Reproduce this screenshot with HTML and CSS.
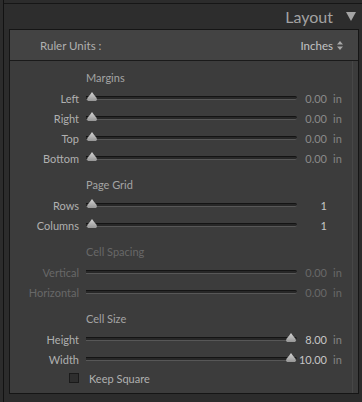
FILE: index.html
```html
<!DOCTYPE html>
<html lang="en">
<head>
  <meta charset="UTF-8">
  <title>Layout</title>
  <link rel="stylesheet" href="styles.css">
</head>
<body>
  <div class="sidebar">
    <div class="header">
      <span class="title">Layout</span>
      <svg class="caret" width="10" height="9" viewBox="0 0 10 9"><path d="M0 0H10L5 9Z" fill="#a4a4a4"/></svg>
    </div>
    <div class="panel">
      <div class="ruler">
        <span>Ruler Units :</span>
        <span class="units">Inches
          <svg class="updown" width="6" height="9" viewBox="0 0 6 9"><path d="M3 0L6 3.5H0Z M3 9L0 5.5H6Z" fill="#a8a8a8"/></svg>
        </span>
      </div>
      <div class="content">
        <div class="group">
          <div class="heading">Margins</div>
          <div class="row"><span class="label">Left</span><div class="track"><span class="thumb"></span></div><span class="value">0.00</span><span class="unit">in</span></div>
          <div class="row"><span class="label">Right</span><div class="track"><span class="thumb"></span></div><span class="value">0.00</span><span class="unit">in</span></div>
          <div class="row"><span class="label">Top</span><div class="track"><span class="thumb"></span></div><span class="value">0.00</span><span class="unit">in</span></div>
          <div class="row"><span class="label">Bottom</span><div class="track"><span class="thumb"></span></div><span class="value">0.00</span><span class="unit">in</span></div>
        </div>
        <div class="group">
          <div class="heading">Page Grid</div>
          <div class="row"><span class="label">Rows</span><div class="track"><span class="thumb"></span></div><span class="value bright">1</span><span class="unit"></span></div>
          <div class="row"><span class="label">Columns</span><div class="track"><span class="thumb"></span></div><span class="value bright">1</span><span class="unit"></span></div>
        </div>
        <div class="group disabled">
          <div class="heading">Cell Spacing</div>
          <div class="row"><span class="label">Vertical</span><div class="track"></div><span class="value">0.00</span><span class="unit">in</span></div>
          <div class="row"><span class="label">Horizontal</span><div class="track"></div><span class="value">0.00</span><span class="unit">in</span></div>
        </div>
        <div class="group">
          <div class="heading">Cell Size</div>
          <div class="row"><span class="label">Height</span><div class="track"><span class="thumb end"></span></div><span class="value bright">8.00</span><span class="unit">in</span></div>
          <div class="row"><span class="label">Width</span><div class="track"><span class="thumb end"></span></div><span class="value bright">10.00</span><span class="unit">in</span></div>
          <label class="check"><span class="box"></span>Keep Square</label>
        </div>
      </div>
    </div>
  </div>
</body>
</html>
```

FILE: styles.css
```css
body {
  margin: 0;
  background: #2c2c2c;
  font-family: Lato, "Open Sans", sans-serif;
  color: #b0b0b0;
  font-size: 11px;
}
.sidebar {
  margin-left: 3px;
  border-left: 1px solid #121212;
  height: 402px;
  box-sizing: border-box;
  padding-top: 3px;
}
.header {
  border-top: 1px solid #161616;
  height: 25px;
  display: flex;
  justify-content: flex-end;
  align-items: center;
  padding-right: 6px;
  background: #2d2d2d;
}
.title {
  font-size: 16px;
  color: #a2a2a2;
}
.caret {
  margin-left: 13px;
}
.panel {
  margin: 0 3px 0 5px;
  border: 1px solid #151515;
  background: #3c3c3c;
  height: 365px;
  box-sizing: border-box;
}
.ruler {
  height: 31px;
  background: #434343;
  border-bottom: 1px solid #1a1a1a;
  display: flex;
  justify-content: space-between;
  align-items: center;
  padding: 0 15px 0 30px;
  box-sizing: border-box;
  font-size: 11.5px;
}
.units {
  display: flex;
  align-items: center;
  gap: 4px;
  color: #c4c4c4;
}
.content {
  padding-top: 6px;
  margin-right: 5px;
  border-right: 1px solid #474747;
  height: 332px;
  box-sizing: border-box;
}
.group {
  margin-bottom: 6px;
}
.heading {
  height: 21px;
  line-height: 21px;
  padding-left: 76px;
  color: #a4a4a4;
}
.row {
  display: grid;
  grid-template-columns: 69px 212px 24px 15px;
  column-gap: 6px;
  align-items: center;
  height: 20px;
}
.label {
  text-align: right;
}
.track {
  position: relative;
  margin-left: 1px;
  background: #272727;
  border-top: 1px solid #141414;
  border-bottom: 1px solid #575757;
  border-radius: 0 2px 2px 0;
  box-sizing: border-box;
  height: 4px;
}
.thumb {
  position: absolute;
  left: 1px;
  top: -5px;
  width: 10px;
  height: 9px;
  background: linear-gradient(#d4d4d4, #959595);
  clip-path: polygon(50% 0, 70% 30%, 95% 65%, 100% 85%, 90% 100%, 10% 100%, 0 85%, 5% 65%, 30% 30%);
}
.thumb.end {
  left: auto;
  right: 1px;
}
.value {
  display: flex;
  justify-content: flex-end;
  white-space: nowrap;
  color: #8a8a8a;
}
.value.bright {
  color: #c6c6c6;
}
.unit {
  color: #838383;
}
.disabled .heading,
.disabled .label,
.disabled .value,
.disabled .unit {
  color: #686868;
}
.check {
  display: flex;
  align-items: center;
  height: 18px;
  padding-left: 59px;
  color: #b0b0b0;
}
.box {
  width: 8px;
  height: 8px;
  border: 1px solid #1a1a1a;
  background: #2e2e2e;
  margin-right: 10px;
}
```
